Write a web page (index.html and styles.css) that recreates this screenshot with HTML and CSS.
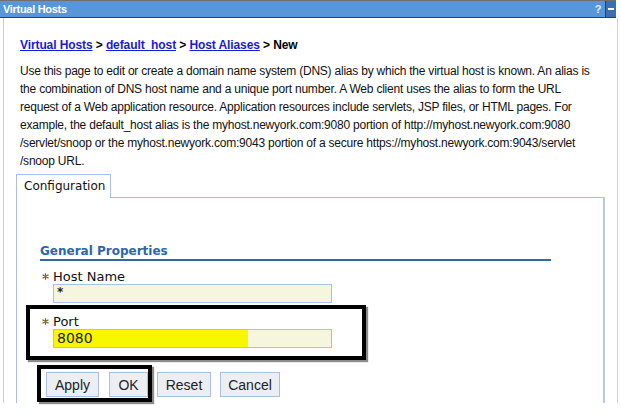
FILE: index.html
```html
<!DOCTYPE html>
<html>
<head>
<meta charset="utf-8">
<link rel="stylesheet" href="styles.css">
</head>
<body>
<div class="window">
  <div class="titlebar">
    <span class="title">Virtual Hosts</span>
    <span class="tb-icons"><span class="help">?</span><span class="min"><span class="dash"></span></span></span>
  </div>
  <div class="body">
    <div class="crumbs"><a href="#">Virtual Hosts</a> &gt; <a href="#">default_host</a> &gt; <a href="#">Host Aliases</a> &gt; New</div>
    <p class="desc">Use this page to edit or create a domain name system (DNS) alias by which the virtual host is known. An alias is<br>the combination of DNS host name and a unique port number. A Web client uses the alias to form the URL<br>request of a Web application resource. Application resources include servlets, JSP files, or HTML pages. For<br>example, the default_host alias is the myhost.newyork.com:9080 portion of http://myhost.newyork.com:9080<br>/servlet/snoop or the myhost.newyork.com:9043 portion of a secure https://myhost.newyork.com:9043/servlet<br>/snoop URL.</p>
    <div class="tabs"><div class="tab">Configuration</div><div class="tab-rest"></div></div>
    <div class="panel">
      <div class="section">General Properties</div>
      <div class="field">
        <div class="label"><svg class="req" width="7" height="7" viewBox="0 0 7 7"><path d="M3.5 0.3V6.7M0.5 1.8L6.5 5.2M0.5 5.2L6.5 1.8" stroke="#7a6a1e" stroke-width="1.3"/></svg><span>Host Name</span></div>
        <div class="input"><span class="star">*</span></div>
      </div>
      <div class="field port">
        <div class="label"><svg class="req" width="7" height="7" viewBox="0 0 7 7"><path d="M3.5 0.3V6.7M0.5 1.8L6.5 5.2M0.5 5.2L6.5 1.8" stroke="#7a6a1e" stroke-width="1.3"/></svg><span>Port</span></div>
        <div class="input"><span class="hl">8080</span></div>
      </div>
      <div class="buttons">
        <button class="btn apply">Apply</button>
        <button class="btn ok">OK</button>
        <button class="btn reset">Reset</button>
        <button class="btn cancel">Cancel</button>
      </div>
    </div>
  </div>
  <div class="mark mark-port"></div>
  <div class="mark mark-btns"></div>
</div>
</body>
</html>
```
FILE: styles.css
```css
html, body {
  margin: 0;
  padding: 0;
  background: #ffffff;
}
.window {
  position: relative;
  width: 621px;
  height: 413px;
  font-family: "Liberation Sans", Arial, sans-serif;
}
.titlebar {
  width: 616px;
  height: 18px;
  box-sizing: border-box;
  background: #5996d9;
  border-top: 1px solid #6f6f6f;
  border-bottom: 1px solid #23426f;
  display: flex;
  align-items: center;
  justify-content: space-between;
}
.title {
  color: #ffffff;
  font-weight: bold;
  font-size: 11px;
  letter-spacing: -0.3px;
  padding-left: 3px;
}
.tb-icons {
  display: flex;
  align-items: center;
  height: 100%;
}
.help {
  color: #e6eefa;
  font-weight: bold;
  font-size: 11px;
  width: 10px;
  text-align: center;
  margin-right: 2px;
}
.min {
  width: 10px;
  height: 16px;
  background: #3c6fb0;
  border-left: 1px solid #23426f;
  display: flex;
  align-items: center;
  justify-content: center;
}
.dash {
  width: 6px;
  height: 2px;
  background: #ffffff;
}
.body {
  margin-left: 3px;
  width: 615px;
  height: 385px;
  box-sizing: border-box;
  border-left: 1px solid #cfcfcf;
  border-right: 1px solid #cfcfcf;
  padding: 19px 12px 0 12px;
  display: flex;
  flex-direction: column;
}
.crumbs {
  padding-left: 4px;
  font-size: 12px;
  font-weight: bold;
  line-height: 16px;
  letter-spacing: -0.1px;
  color: #000;
}
.crumbs a {
  color: #1a1adb;
  text-decoration: underline;
}
.desc {
  margin: 9px 0 0 0;
  padding-left: 4px;
  font-size: 12px;
  line-height: 18px;
  letter-spacing: -0.22px;
  color: #111;
  white-space: nowrap;
}
.tabs {
  display: flex;
  margin-top: 4px;
  height: 24px;
}
.tab {
  width: 95px;
  box-sizing: border-box;
  border: 1px solid #a9bfe6;
  border-bottom: none;
  font-family: "DejaVu Sans", sans-serif;
  font-size: 12px;
  line-height: 22px;
  padding-left: 7px;
  color: #111;
}
.tab-rest {
  flex: 1;
  border-bottom: 1px solid #a9bfe6;
  border-right: 2px solid #b7c9ec;
  margin-top: 23px;
}
.panel {
  flex: 1;
  border-left: 1px solid #a9bfe6;
  border-right: 2px solid #b7c9ec;
  padding: 45px 0 0 23px;
  font-family: "DejaVu Sans", sans-serif;
}
.section {
  width: 511px;
  color: #2e66a8;
  font-weight: bold;
  font-size: 12px;
  line-height: 16px;
  border-bottom: 2px solid #3467a4;
}
.field {
  margin-top: 8px;
}
.field.port {
  margin-top: 11px;
}
.label {
  display: flex;
  align-items: center;
  height: 15px;
  font-size: 13px;
  color: #111;
}
.req {
  margin: 0 4px 0 2px;
}
.input {
  margin-left: 13px;
  width: 279px;
  height: 19px;
  box-sizing: border-box;
  border: 1px solid #a9bfe6;
  background: #f6f6df;
  display: flex;
  align-items: stretch;
}
.star {
  font-size: 12px;
  font-weight: bold;
  line-height: 14px;
  padding-left: 3px;
  color: #222;
}
.hl {
  width: 194px;
  background: #f7f700;
  font-size: 14px;
  line-height: 17px;
  padding-left: 3px;
  box-sizing: border-box;
  color: #222;
}
.buttons {
  display: flex;
  gap: 9px;
  margin: 24px 0 0 6px;
}
.btn {
  height: 25px;
  box-sizing: border-box;
  border: 1px solid #a9bfe6;
  background: #eceef4;
  font-family: "Liberation Sans", Arial, sans-serif;
  font-size: 14px;
  color: #222;
  padding: 0;
}
.apply { width: 53px; margin-right: 1px; }
.ok { width: 39px; }
.reset { width: 54px; }
.cancel { width: 60px; }
.mark {
  position: absolute;
  border: 4px solid #000;
  box-shadow: 2px 2px 1px rgba(0,0,0,0.45);
  box-sizing: border-box;
}
.mark-port {
  left: 26px;
  top: 305px;
  width: 340px;
  height: 55px;
}
.mark-btns {
  left: 37px;
  top: 365px;
  width: 115px;
  height: 37px;
}
```
